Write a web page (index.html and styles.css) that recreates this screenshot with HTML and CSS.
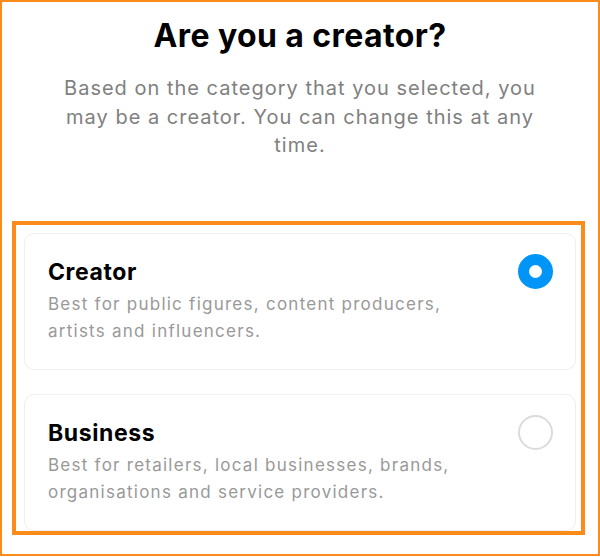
FILE: index.html
```html
<!DOCTYPE html>
<html lang="en">
<head>
<meta charset="utf-8">
<title>Are you a creator?</title>
<link rel="stylesheet" href="styles.css">
</head>
<body>
<div class="frame">
  <header class="intro">
    <h1 class="title">Are you a creator?</h1>
    <p class="subtitle">Based on the category that you selected, you may be a creator. You can change this at any time.</p>
  </header>
  <div class="options">
    <div class="card">
      <div class="card-text">
        <h2 class="card-title">Creator</h2>
        <p class="card-desc">Best for public figures, content producers, artists and influencers.</p>
      </div>
      <span class="radio radio-on"></span>
    </div>
    <div class="card">
      <div class="card-text">
        <h2 class="card-title">Business</h2>
        <p class="card-desc">Best for retailers, local businesses, brands, organisations and service providers.</p>
      </div>
      <span class="radio"></span>
    </div>
  </div>
  <div class="highlight"></div>
</div>
</body>
</html>
```

FILE: styles.css
```css
* { box-sizing: border-box; }
html, body { margin: 0; padding: 0; background: #fff; }
body { font-family: Inter, "Noto Sans", sans-serif; }
.frame {
  position: relative;
  width: 600px;
  height: 556px;
  overflow: hidden;
  box-shadow: inset 0 0 0 2px #fb8c1c;
}
.intro { text-align: center; }
.title {
  margin: 0;
  padding-top: 16px;
  font-size: 32px;
  line-height: 40px;
  font-weight: 700;
  letter-spacing: 0.4px;
  color: #000;
}
.subtitle {
  margin: 18px auto 0;
  max-width: 490px;
  font-size: 20px;
  line-height: 28.5px;
  letter-spacing: 1px;
  color: #808080;
}
.options {
  margin: 73px 24px 0;
  display: flex;
  flex-direction: column;
  gap: 24px;
}
.card {
  height: 137px;
  border: 1px solid #efefef;
  border-radius: 10px;
  padding: 20px 22px 0 23px;
  display: flex;
  justify-content: space-between;
  align-items: flex-start;
}
.card-text { max-width: 430px; padding-top: 4px; }
.card-title {
  margin: 0;
  font-size: 23px;
  line-height: 28px;
  font-weight: 700;
  letter-spacing: 0.6px;
  color: #000;
}
.card-desc {
  margin: 5px 0 0;
  font-size: 17px;
  line-height: 27px;
  letter-spacing: 1.25px;
  color: #999;
}
.radio {
  flex: none;
  width: 35px;
  height: 35px;
  border-radius: 50%;
  border: 2px solid #dbdbdb;
}
.radio-on {
  border: 11px solid #0095f6;
  background: #fff;
}
.highlight {
  position: absolute;
  left: 12px;
  top: 221px;
  width: 573px;
  height: 314px;
  border: 4px solid #fb8c1c;
}
```
